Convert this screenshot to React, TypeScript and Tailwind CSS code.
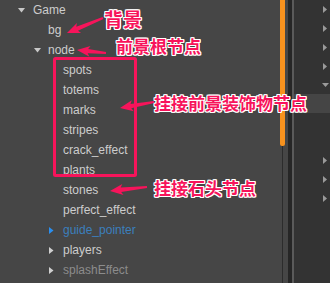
import React from "react";

type Row = { label: string; level: number; arrow?: "down" | "right" | "blue"; tone?: "normal" | "blue" | "dim" };

const rows: Row[] = [
  { label: "Game", level: 0, arrow: "down" },
  { label: "bg", level: 1 },
  { label: "node", level: 1, arrow: "down" },
  { label: "spots", level: 2 },
  { label: "totems", level: 2 },
  { label: "marks", level: 2 },
  { label: "stripes", level: 2 },
  { label: "crack_effect", level: 2 },
  { label: "plants", level: 2 },
  { label: "stones", level: 2 },
  { label: "perfect_effect", level: 2 },
  { label: "guide_pointer", level: 2, arrow: "blue", tone: "blue" },
  { label: "players", level: 2, arrow: "right" },
  { label: "splashEffect", level: 2, arrow: "right", tone: "dim" },
];

function Tri({ kind }: { kind: "down" | "right" | "blue" }) {
  if (kind === "down")
    return (
      <svg width="7" height="5" viewBox="0 0 7 5">
        <polygon points="0,0 7,0 3.5,4.5" fill="#c8c8c8" />
      </svg>
    );
  return (
    <svg width="5" height="7" viewBox="0 0 5 7">
      <polygon points="0,0 4.5,3.5 0,7" fill={kind === "blue" ? "#2a8ff0" : "#d0d0d0"} />
    </svg>
  );
}

function arrowPoints(x1: number, y1: number, x2: number, y2: number) {
  const dx = x2 - x1;
  const dy = y2 - y1;
  const len = Math.hypot(dx, dy);
  const ux = dx / len;
  const uy = dy / len;
  const nx = -uy;
  const ny = ux;
  const headL = 11;
  const bx = x2 - ux * headL;
  const by = y2 - uy * headL;
  const p = (x: number, y: number) => `${x.toFixed(1)},${y.toFixed(1)}`;
  return [
    p(x1 + nx * 1, y1 + ny * 1),
    p(bx + nx * 2.2, by + ny * 2.2),
    p(bx - ux * 2 + nx * 5.5, by - uy * 2 + ny * 5.5),
    p(x2, y2),
    p(bx - ux * 2 - nx * 5.5, by - uy * 2 - ny * 5.5),
    p(bx - nx * 2.2, by - ny * 2.2),
    p(x1 - nx * 1, y1 - ny * 1),
  ].join(" ");
}

const label =
  'absolute font-bold leading-none text-[#f7145b] [font-family:"Noto_Sans_CJK_SC",sans-serif] [text-shadow:1px_0_#fff,-1px_0_#fff,0_1px_#fff,0_-1px_#fff,1px_1px_#fff,-1px_-1px_#fff,1px_-1px_#fff,-1px_1px_#fff]';

export default function App() {
  const pink = "#f7145b";
  return (
    <div
      className="relative flex h-[283px] w-[330px] overflow-hidden bg-[#464646]"
      style={{ fontFamily: '"Liberation Sans", Arial, sans-serif' }}
    >
      {/* tree */}
      <div className="flex w-[280px] flex-col">
        {rows.map((r, i) => {
          const pad = r.level === 0 ? "pl-[33px]" : r.level === 1 ? "pl-[48px]" : "pl-[63px]";
          const color =
            r.tone === "blue" ? "text-[#3b7fbd]" : r.tone === "dim" ? "text-[#8c8c8c]" : "text-[#cdcdcd]";
          return (
            <div key={i} className={`relative flex h-[20px] items-center ${pad}`}>
              {r.arrow && (
                <span
                  className={`absolute flex ${
                    r.arrow === "down"
                      ? r.level === 0
                        ? "left-[18px] top-[8px]"
                        : "left-[34px] top-[8px]"
                      : "left-[49px] top-[7px]"
                  }`}
                >
                  <Tri kind={r.arrow} />
                </span>
              )}
              <span className={`text-[12px] leading-none ${color}`}>{r.label}</span>
            </div>
          );
        })}
      </div>

      {/* scrollbar column */}
      <div className="relative w-[8px] bg-[#464646]">
        <div className="absolute left-[2px] top-0 h-full w-[1px] bg-[#2c2c2c]" />
        <div className="absolute left-0 top-0 h-[146px] w-[5px] rounded-b-[2px] bg-[#f7921e]" />
      </div>
      <div className="w-[4px] bg-[#262626]" />
      <div className="w-[2px] bg-[#5a5a5a]" />

      {/* right panel */}
      <div className="flex flex-1 flex-col bg-[#333333]">
        {[10, 29, 48, 67].map((y) => (
          <div key={y} className="flex h-[19px] items-center justify-end pr-[3px]">
            <svg width="4" height="7" viewBox="0 0 4 7">
              <polygon points="0,0 4,3.5 0,7" fill="#9a9a9a" />
            </svg>
          </div>
        ))}
        <div className="flex h-[18px] items-center justify-end pr-[1px]">
          <svg width="7" height="4" viewBox="0 0 7 4">
            <polygon points="0,0 7,0 3.5,4" fill="#9a9a9a" />
          </svg>
        </div>
        <div className="h-[19px] bg-[#454545]" />
        <div className="h-[38px]" />
        {[1, 2, 3].map((k) => (
          <div key={k} className="flex h-[19px] items-center justify-end pr-[3px]">
            <svg width="4" height="7" viewBox="0 0 4 7">
              <polygon points="0,0 4,3.5 0,7" fill="#9a9a9a" />
            </svg>
          </div>
        ))}
      </div>

      {/* annotations */}
      <svg className="pointer-events-none absolute left-0 top-0" width="330" height="283">
        <rect x="54.5" y="58.5" width="81" height="117" fill="none" stroke={pink} strokeWidth="3" rx="1" />
        <polygon points={arrowPoints(103, 18, 67, 33)} fill={pink} />
        <polygon points={arrowPoints(106, 53, 77, 50)} fill={pink} />
        <polygon points={arrowPoints(154, 102, 120, 108)} fill={pink} />
        <polygon points={arrowPoints(147, 187, 110, 191)} fill={pink} />
      </svg>
      <span className={`${label} left-[104px] top-[9px] text-[19px]`}>背景</span>
      <span className={`${label} left-[116px] top-[37px] text-[17px]`}>前景根节点</span>
      <span className={`${label} left-[154px] top-[94px] text-[17px]`}>挂接前景装饰物节点</span>
      <span className={`${label} left-[154px] top-[179px] text-[17px]`}>挂接石头节点</span>
    </div>
  );
}
